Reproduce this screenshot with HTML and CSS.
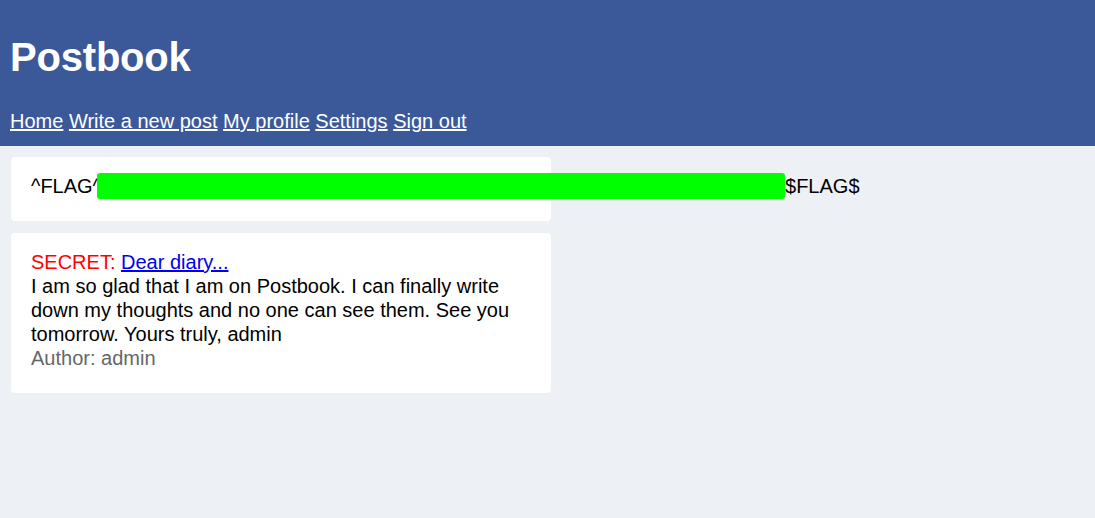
FILE: index.html
```html
<!DOCTYPE html>
<html>
<head>
<meta charset="utf-8">
<title>Postbook</title>
<link rel="stylesheet" href="styles.css">
</head>
<body>
<header class="header">
  <h1 class="title">Postbook</h1>
  <nav class="nav">
    <a href="#">Home</a> <a href="#">Write a new post</a> <a href="#">My profile</a> <a href="#">Settings</a> <a href="#">Sign out</a>
  </nav>
</header>
<main class="main">
  <div class="card flag-card">^FLAG^<span class="redact"></span>$FLAG$</div>
  <div class="card post-card">
    <div><span class="secret">SECRET:</span> <a class="post-link" href="#">Dear diary...</a></div>
    <div>I am so glad that I am on Postbook. I can finally write down my thoughts and no one can see them. See you tomorrow. Yours truly, admin</div>
    <div class="author">Author: admin</div>
  </div>
</main>
</body>
</html>
```

FILE: styles.css
```css
html, body {
  margin: 0;
  padding: 0;
}
body {
  background: #edf0f5;
  font-family: "Liberation Sans", Arial, sans-serif;
  font-size: 20px;
  line-height: 24px;
  color: #000;
  min-height: 518px;
}
.header {
  background: #3b5998;
  padding: 34px 10px 13px;
}
.title {
  margin: 0 0 29px;
  color: #fff;
  font-size: 40px;
  line-height: 46px;
  font-weight: bold;
  letter-spacing: -0.2px;
}
.nav {
  height: 24px;
}
.nav a {
  color: #fff;
  text-decoration: underline;
}
.main {
  padding: 11px 11px;
  display: flex;
  flex-direction: column;
  gap: 12px;
  align-items: flex-start;
}
.card {
  background: #fff;
  width: 500px;
  padding: 17px 20px 22px;
  border-radius: 4px;
}
.post-card {
  padding-bottom: 23px;
}
.flag-card {
  white-space: nowrap;
  height: 24px;
  padding-bottom: 23px;
}
.redact {
  display: inline-block;
  width: 688px;
  height: 26px;
  margin: -1px 0 -1px -5px;
  background: #00ff00;
  border-radius: 3px;
  vertical-align: top;
}
.secret {
  color: #ff0000;
}
.post-link {
  color: #0000ee;
}
.author {
  color: #666;
}
```
